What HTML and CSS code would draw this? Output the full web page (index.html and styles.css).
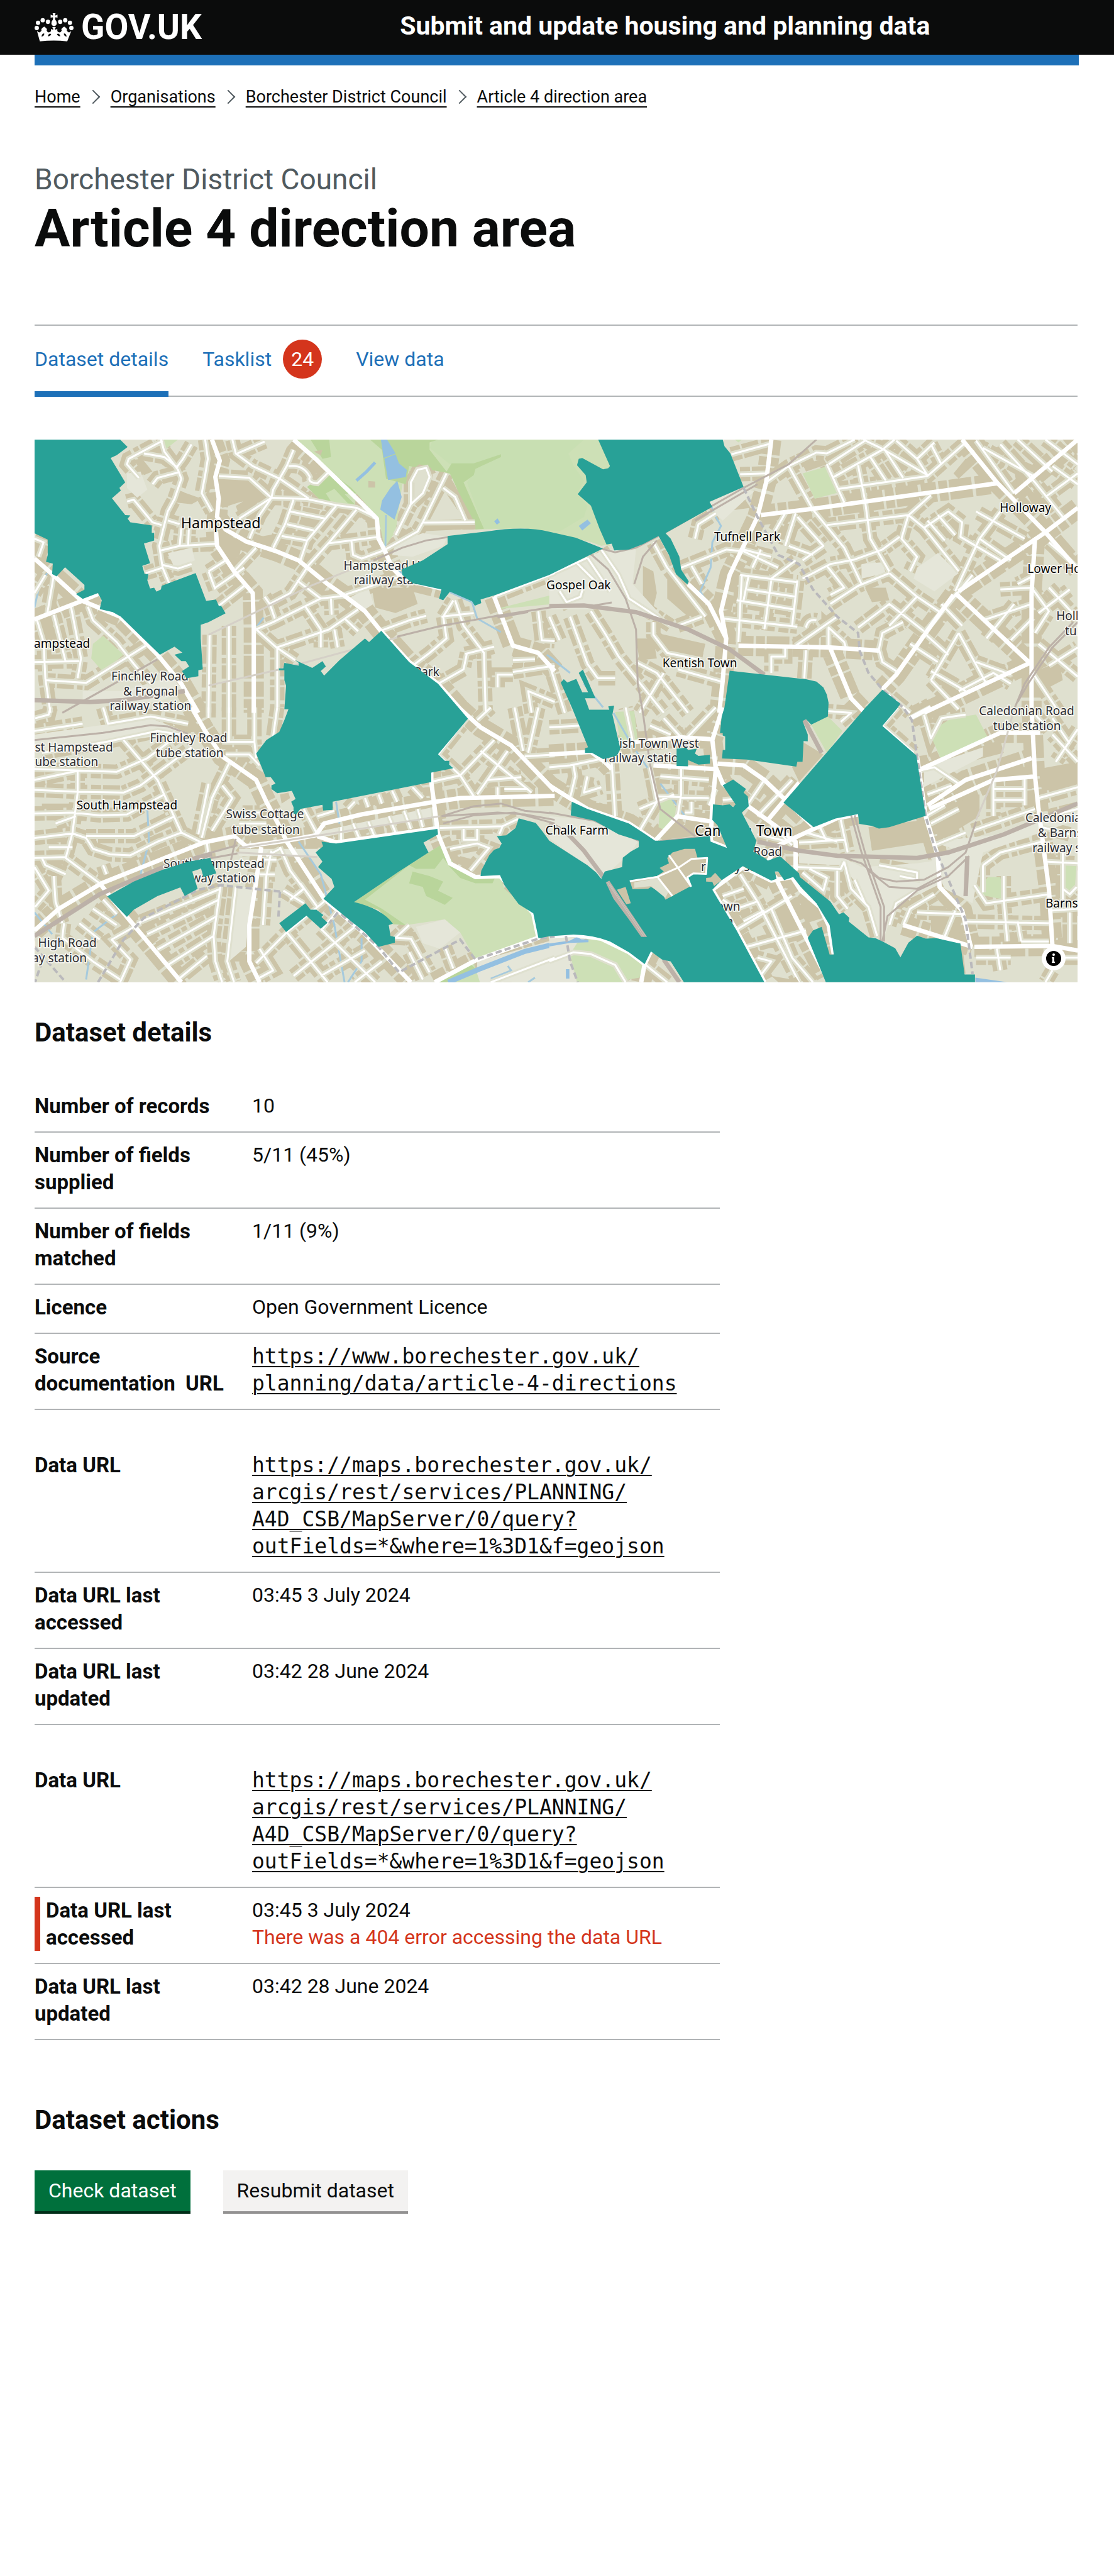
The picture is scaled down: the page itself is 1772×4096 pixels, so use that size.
FILE: index.html
```html
<!DOCTYPE html>
<html lang="en">
<head>
<meta charset="utf-8">
<meta name="viewport" content="width=device-width, initial-scale=1">
<title>Article 4 direction area - Submit and update housing and planning data</title>
<link rel="stylesheet" href="styles.css">
</head>
<body>
<header class="header">
  <div class="header-inner">
    <a class="logo" href="#" aria-label="GOV.UK">
      <svg class="crown" viewBox="18 24 216 157" aria-hidden="true">
        <circle cx="30" cy="106" r="12"/><circle cx="37" cy="77" r="12"/><circle cx="63" cy="63" r="12"/><circle cx="92" cy="72" r="12"/>
        <circle cx="222" cy="106" r="12"/><circle cx="214" cy="77" r="12"/><circle cx="188" cy="63" r="12"/><circle cx="160" cy="72" r="12"/>
        <path d="M118 24h16l-3 11q6 3 14-3v18q-8-5-14-2l2 13q8 8 8 19 0 12-15 17-15-5-15-17 0-11 8-19l2-13q-6-3-14 2V32q8 6 14 3z"/>
        <path d="M31 122q7 9 14 8 9-1 12-12-5-6 2-9 1-5 12-11 11 6 12 11 7 4 1 9 5 12 12 12 8 0 13-7v-12l8 4q6 0 5-3l-6-11h20l-6 11q0 3 6 3l8-4v12q5 7 13 7 8 0 12-12-6-5 1-9 1-5 12-11 11 6 12 11 7 3 2 9 3 11 12 12 7 1 14-8l-23 58Q126 171 47 180zM56 154q15-2 16-17-12-3-16 17zm35-2q16 0 19-12-12-8-19 12zm70 0q-7-20-19-12 3 12 19 12zm35 2q-4-20-16-17 1 15 16 17z" fill-rule="evenodd"/>
      </svg>
      <span>GOV.UK</span>
    </a>
    <a class="service" href="#">Submit and update housing and planning data</a>
  </div>
</header>
<div class="page">
  <div class="accent"></div>
  <nav aria-label="Breadcrumb">
    <ol class="crumbs">
      <li><a href="#">Home</a></li>
      <li><a href="#">Organisations</a></li>
      <li><a href="#">Borchester District Council</a></li>
      <li><a href="#">Article 4 direction area</a></li>
    </ol>
  </nav>
  <main>
    <p class="caption">Borchester District Council</p>
    <h1>Article 4 direction area</h1>
    <nav class="tabs" aria-label="Dataset">
      <a class="tab current" href="#" aria-current="page">Dataset details</a>
      <a class="tab" href="#">Tasklist <span class="count">24</span></a>
      <a class="tab" href="#">View data</a>
    </nav>

    <div class="map">
      <svg class="city" viewBox="64 808 1917 997" role="img" aria-label="Map of article 4 direction areas">
        <defs>
          <g id="roads-nw" transform="translate(40 790) scale(.625 .33333)">
            <path d="M410 54L420 120L460 220L470 270L450 380L430 450L415 560L405 640L415 760L435 850M500 80L475 160L455 210M345 265L310 190L315 160L415 60M360 130L420 150L460 210M385 300L400 265L460 235M540 54L548 160L540 250L530 350L560 450M620 54L630 130L680 200L760 270L845 380M715 65L635 130M800 110L780 200L740 330L735 375L640 490M580 255L670 265L735 375M735 375L700 470L670 600M800 385L775 520L740 650M925 420L840 610L820 720M985 440L905 620L845 745L790 900L730 960M790 450L895 490M780 520L860 555M765 585L840 610M905 625L1050 590M970 610L975 690L1000 710L1065 665M410 665L465 640L575 628M465 640L470 540M490 640L492 550M430 500L465 520M310 395L330 385L385 510L412 525M550 780L600 720M570 870L655 760M580 970L655 860M570 880L550 780M690 650L625 780M365 790L415 760M415 745L460 765L500 740"/>
            <path d="M735 375L840 382L925 415L985 430L1040 480M750 1200L905 1100L990 990M690 1100L740 1060L880 930L950 915M690 1100L750 1200L805 1270M730 960L745 1040M715 920L730 960M835 975L880 1100L880 1200M910 930L912 1020M810 830L880 930M1060 1105L1140 1050L1190 1025M950 910L1110 810M950 1040L990 1110M920 1100L930 1200M610 1080V1560M553 1130L550 1560M752 1200V1530M45 1045L65 1170L70 1370L85 1560M95 1020L130 1280M145 970L175 1260L165 1370M195 975L210 1050L280 1170L330 1290M38 1280L170 1275M70 1380L190 1395L365 1190M330 1290L380 1400M38 600L65 620L50 700M70 800L38 900M95 800L75 1020"/>
            <path d="M1240 1030L1250 1150L1200 1230L1150 1300M1275 940L1300 1080L1360 1230L1365 1560M1235 1030L1330 1010M1305 1235L1390 1195M1390 920L1568 790M1225 1400L1300 1320L1310 1230M1445 1270L1510 1265M1445 1335L1568 1300M1500 1560L1490 1440L1568 1500M1240 1030L1270 940M1520 1000L1530 1160L1568 1165M1400 1420V1350H1445M1145 410V290L1165 220L1190 210L1200 260L1180 350L1145 410L1100 580M1250 240L1180 510L1165 560L1070 660M1180 512L1333 510M1240 320L1275 370L1305 500M785 200Q830 190 848 260Q840 290 870 295L905 230"/>
          </g>
          <g id="main-nw" transform="translate(40 790) scale(.625 .33333)">
            <path d="M800 54L865 160L1000 405L1045 490L1050 600L1068 665L1090 760L1110 800L1160 840L1235 875M560 54L583 170L570 260L580 380L575 480L600 550L660 615L750 670L815 720L900 850L950 915L1010 1000L1055 1105L1140 1280L1225 1400L1300 1560M572 560L575 640L625 780L680 900L683 1090V1560M38 710L90 795L175 940L290 1030L400 1240L470 1400L520 1560M38 1045L175 945L225 905M1390 920L1445 1190L1520 1230L1568 1330"/>
          </g>
          <g id="roads-ne" transform="translate(1010 790) scale(.63776 .33333)">
            <path d="M525 135L640 75M550 245L625 240M625 290L690 200L770 125L800 130L880 54M690 200L760 440L850 650L900 850M800 190L850 400M805 190L910 60M820 260L960 110L995 54M835 325L1090 255L1200 70M905 54L960 105L1090 250M890 195L910 390L925 600L980 780M925 150L970 280M965 105L1020 265M1000 60L1060 160L1110 70M1060 160L1090 250M800 525L1035 470M680 460L650 560M710 460L680 640M715 480L790 640L730 720M690 640L760 690M1035 470L1080 540L1150 450L1190 510L1185 590L1300 720M1080 540L1180 780M1035 470L1015 600L1060 700L1040 780M1090 500L1140 610M1120 470L1170 580M1300 450L1240 600L1170 890M1240 600L1330 720M1100 360L1030 480M380 760L510 660L560 670L660 760M560 660L640 700M610 660L585 760M710 720L640 820M550 800L715 840M570 880L710 920M540 940L705 990M500 1040L715 1085M555 800L545 1170M575 800L560 940M640 830L620 1100M715 830L700 1080"/>
            <path d="M730 820L810 740L880 715L960 660L1010 590M810 960L890 860L980 790M800 750L850 870L810 910M980 790L1060 920L1130 1010M890 1090L980 960L1080 1110M950 1210L960 1120L1020 1060M950 1210L960 1280L1000 1330M1080 1120L1150 1240M1080 1120L1220 800M1180 1120L1100 1380M1250 1050L1390 960M1330 1160L1390 1045M1390 810L1350 850M1390 870L1440 1000L1400 1120M1100 1330L1200 1440M1180 1120L1260 1400M1060 920L980 1080M710 1190L830 1030M805 1200V1090L850 1170L855 1200M740 1090Q745 1040 770 1050M60 1030L110 1290L140 1370L190 1370M120 1000L160 1120L200 1250L330 1560M0 800L110 705M80 735L130 830M110 705L175 890M30 890L50 950L90 920L100 850M440 1030L370 1080M250 1280L310 1340L400 1560M370 1320L500 1390M330 1340L260 1560M0 1030L30 1160M0 1290L45 1560M740 1215L735 1370M680 1200V1250H640V1340M300 1060V1130L340 1230L440 1270M150 660L200 800L230 930L350 1080"/>
            <path d="M1230 60L1340 350M1300 80L1400 290L1480 480M1400 260L1250 100M1430 370L1523 240M1370 600L1230 450M1100 80L1130 190M1450 200L1523 300M1350 54L1450 230M1430 54L1523 190M1440 620L1523 760M1440 870L1523 1040M1440 1300L1523 1200M1390 1330L1470 1560M1410 1010L1500 880M1410 1180L1523 1360M1340 960L1260 1150M1300 880L1390 870M1230 1280L1330 1350M1180 1440L1280 1340L1330 1400M1130 960L1190 1080M1040 1180L1120 1280M1100 1380L1180 1540M960 1430L1040 1560M300 620L340 760L450 1030M420 600L430 520L480 460M410 750L440 850"/>
          </g>
          <g id="main-ne" transform="translate(1010 790) scale(.63776 .33333)">
            <path d="M640 54L625 290L600 480L520 800L495 1000L510 1150L500 1380L490 1560M610 470L760 435L1290 295M1190 54L1290 290L1430 565L1523 770M1400 600L1390 900V1560M1430 565L1180 890M1170 900L1385 1285L1080 1560M1165 910L1100 1080L1000 1350L960 1430M1523 430L1430 565M1340 350L1523 54M545 1190L810 1200L950 1217M810 1205L870 1480L910 1560M400 850L460 960L510 1150"/>
          </g>
          <g id="roads-sw" transform="translate(40 1300) scale(.625 .33333)">
            <path d="M38 455L165 465L300 470L350 430L500 220M38 340L280 355L370 280L470 140M300 180L400 400L470 690L535 750M165 350V470L150 690L130 830L230 970M38 585L150 580L230 595L310 590L420 480M38 720L150 695L190 720L210 780L260 810L320 815L400 740L470 690M190 710L330 710L450 600M38 830L130 825M60 830L70 870L130 920M685 0V190L690 280M610 0V190M752 0L740 160M550 0V60M590 190L685 190M600 260L670 260L700 320M550 420L520 700M610 310L560 500L530 720M590 430L620 500L560 680M545 740L550 830M650 580H700M640 640H720M100 640L160 600M80 770H150M240 870L250 920M40 60L80 40L85 0M38 130L180 90M255 90L380 50L490 90M240 0L255 95M38 400L165 350M60 250L250 190L400 130L500 160"/>
            <path d="M585 985L565 1260L570 1400L590 1515M630 990L605 1400L625 1515M580 1060L370 1250M575 1150L400 1335M565 1260L430 1420M545 1370L460 1500M585 1000L340 1190M350 1190L265 1280L320 1390L290 1515M125 1190L120 1270L210 1400L290 1500M95 930L100 1070L120 1190M38 880L80 1010L40 1100M780 1240L900 1515M880 1220L1040 1515M890 1070L780 1240L690 1410M980 1210L800 1480M1010 1340L880 1480M1060 1400L980 1515M930 1120L885 1220M700 1330L740 1450L700 1490M760 770L790 900L830 1000L790 1060M735 790L720 930L710 1200M700 840H750M700 920H745M760 780L720 820M210 1110L280 1200M240 1060L280 1140M170 1190L230 1280M770 1010L830 1080M820 970L870 1100"/>
            <path d="M1205 410L1290 375L1330 490M1225 260L1310 60M1225 260L1290 375L1390 180M1350 240L1500 470M1370 400L1470 385M1340 480L1430 240M1480 270L1568 260M1340 70L1380 0M1450 0L1475 240M1520 0L1490 250M1400 440V490M1420 450H1490M960 560L980 520M1010 500L1020 550M1050 480L1060 530M1090 460L1105 520M1150 440L1180 500M1125 570L1145 670M1165 560L1180 660M1210 550L1220 670M975 640L995 730M1020 630L1040 720M1080 600L1100 690M940 660V740M870 600L920 570M830 560L870 700M1230 665L1415 655L1460 615M1260 780L1340 750L1375 775L1320 900M1300 670V730H1340V670M1415 655L1405 700M1140 1200L1100 1270L1145 1275L1200 1460M1245 1320L1270 1440M1140 1350L1180 1500M1380 1515L1568 1380"/>
          </g>
          <g id="main-sw" transform="translate(40 1300) scale(.625 .33333)">
            <path d="M500 0L540 130L590 270L690 400L720 520L760 660L780 740L890 1055L1010 1250L1145 1515M38 1230L110 1110L235 970L535 745L625 710L660 765L780 735L865 705L890 640L1000 590L1200 525L1290 500L1568 488M705 770L690 960L670 1200V1400L700 1515M1285 0L1350 110L1440 210L1568 460M230 970L310 1155L470 1515M870 710L925 745L1225 665M1205 340V410L1225 700L1260 860L1335 935L1408 930L1505 1135L1520 1270L1335 1395L1215 1515"/>
          </g>
          <g id="roads-se" transform="translate(1010 1300) scale(.63776 .33333)">
            <path d="M180 300L190 600M60 500L75 380L70 320M0 330L60 320L160 280M380 330V480L370 600M290 330L310 520L260 680M310 490L460 500M260 560L360 480M320 380L460 400M110 380L100 470L150 440M480 450L460 540M390 580H410V520M560 500L500 510M570 540L620 400M600 600L660 480L700 400M240 180L220 0M380 165L330 60M400 160L480 0M290 100L350 150M0 110L90 100M720 0L760 90M840 80L870 30L800 20M840 620L860 800M720 745L850 730M740 690L830 740M780 660L800 740M715 880L840 890L850 850M850 850L870 1000L920 1100L945 1260M830 900V1040L860 1110M880 950L910 1080M730 910L790 1010L800 940L750 890M950 870L1060 910V950L1010 930M1280 400V600M1370 395L1370 540M1280 450H1370M1280 510H1370M1410 500L1523 440M1220 680L1400 560M1250 870L1300 800L1420 740M1430 850L1523 860M1225 980L1260 1080L1440 1030M1310 930V1060L1320 1290M1200 1180L1440 1190M1360 1290L1350 1180M1523 300L1450 150M1250 870V1020M1480 860V1000L1500 1030L1520 990M1500 1130V1300M1450 1450L1430 1515M1290 1330L1300 1450M1230 1380H1330M1360 1290H1440M1450 1120L1523 1110M1480 760V1060M1450 1380H1523"/>
            <path d="M0 1400L70 1350L120 1360L190 1420L220 1515M275 1415L340 1515M550 920L600 1070L720 1515M540 1225L700 1040M500 1040L560 1000M570 1320L740 1230M500 1060L540 1110L600 1070M560 1180L620 1120M600 1500L640 1400L600 1380M640 1110L700 1380L760 1515M1060 1010L1000 1080L980 1200M1110 1030L1040 1110L1020 1200M1170 1120L1140 1260M1060 1130L1190 1140M1110 760L1200 690M1100 640L1180 560M1085 600L1140 540M1090 480L1160 430M640 650L700 760M600 700L690 740M230 960L320 930L380 860L455 830M340 820L408 980M1005 0L960 100L1050 250M1040 60L1100 0M1080 40L1100 170L1130 60L1200 40M1040 360L1110 330L1180 420M1450 60L1500 200M1400 40L1440 120M1523 120L1460 300M1420 660L1500 700M1440 600L1523 560"/>
          </g>
          <g id="main-se" transform="translate(1010 1300) scale(.63776 .33333)">
            <path d="M500 0L470 180L480 340L470 540L465 740L512 775M0 430L50 490L110 560L230 640L305 735L370 600L470 630M480 330L500 420L570 540L650 650L710 740V900M0 260L120 245L250 190L380 165L465 175M120 245L160 300L180 340M630 850L660 760L830 610L890 590M300 320L475 340M485 310L560 320L620 400L760 655M720 415L630 620M1040 60L1100 0M1060 350L1300 140H1415M1390 0L1400 380L1410 560L1440 1000L1450 1310M1060 270L1085 600L1120 820L1125 990L1190 1120L1215 1320M1225 1320L1450 1315L1523 1340M1090 540L1200 400L1390 280M1095 560L1280 400L1400 380M1020 1200L1220 1320M700 935L725 1010L780 1100L805 1200L820 1360M470 1005L540 1230L620 1515M650 930L740 1270L797 1480M470 1005L560 880L640 955L700 935M0 1262L70 1253L150 1275L230 1350L275 1415L265 1515M275 1415L293 1345"/>
          </g>
        </defs>

        <rect class="land" x="64" y="808" width="1917" height="997"/>

        <use class="frontage" href="#roads-nw"/><use class="frontage" href="#roads-ne"/><use class="frontage" href="#roads-sw"/><use class="frontage" href="#roads-se"/>
        <use class="frontage wide" href="#main-nw"/><use class="frontage wide" href="#main-ne"/><use class="frontage wide" href="#main-sw"/><use class="frontage wide" href="#main-se"/>

        <g transform="translate(40 790) scale(.625 .33333)">
          <path class="block" d="M1030 870H1150L1165 960L1100 1010L1040 980zM580 580L620 590L650 620L640 700L610 720L580 660zM700 590L760 570L750 660L680 620zM575 270H680L730 370L690 380L640 400L590 430zM50 1045H85L110 1160L60 1180zM330 165L355 160L385 230L360 250zM545 370L580 380L585 490L555 450zM470 340L530 380L500 410L450 400zM1450 1200L1520 1230L1510 1260L1460 1260zM630 420L700 340L720 370L640 470z"/>
          <path class="open" d="M310 240L350 230L370 330L340 375L310 320zM430 680L500 650L510 720L450 760zM1100 620L1180 570L1253 590L1240 640L1150 700L1090 690zM960 930L1020 870L1035 960L1010 990zM180 1440L300 1440L440 1360L480 1440L400 1500H180z"/>
          <path class="park" d="M800 54H1730V640L1480 543L1335 550L1300 300L1250 235L1200 190L1150 200L1120 300L1100 560L1068 650L1050 490L985 350L905 230L865 160zM240 1135L300 1240L240 1335L205 1260L210 1180zM1390 990L1560 910L1568 960zM840 315L900 230L985 350L980 420L880 390zM415 54H460L425 105z"/>
          <path class="heath" d="M1210 54H1568V560L1480 543L1360 545L1310 290L1335 215L1260 190L1200 100z"/>
          <path class="wood" d="M850 54H905L910 150L885 160zM1025 54H1225L1200 70V110L1250 230L1265 185H1330L1410 135V150L1335 215L1330 250L1300 290L1360 545L1335 550L1260 240L1140 200L1130 300L1072 270L1060 110zM840 315L900 230L935 270L970 320L985 350L950 355L980 410L960 405L920 325L895 350L910 395L880 390z"/>
          <path class="water" d="M1057 54H1075L1100 130L1065 155zM1067 160L1100 135L1110 185L1133 220L1130 260L1078 277zM1085 320L1105 280L1118 370L1097 495L1055 440L1060 390zM1390 505L1400 488L1407 510L1398 523z"/>
          <path class="creek" d="M985 280L1015 230L1040 180"/>
          <path class="stream" d="M1072 470L1070 650L1090 760L1190 860L1235 880M1260 895L1325 950L1340 1040L1410 1115M75 790L50 880L38 980M690 1090L712 1035M1545 1240L1568 1270"/>
          <path class="block" d="M1140 230L1170 190L1205 210L1210 260L1180 360L1140 420zM1250 235L1270 290L1335 520V545L1170 560L1190 440zM1020 282L1040 285V318H1020zM860 120L885 110L880 140z"/>
          <path class="land" d="M1155 280L1165 230L1190 215L1195 260L1175 350L1155 390zM1245 340L1300 490L1200 500z"/>
        </g>
        <g transform="translate(1010 790) scale(.63776 .33333)">
          <path class="block" d="M270 750L300 780L310 900L300 980L270 950zM340 780L400 860L460 1000L400 1030L340 930zM210 740L230 700L245 720L240 770zM250 1150H300L310 1260L260 1270zM310 1120L450 1180L440 1260L340 1230zM1200 160L1230 180L1180 270L1165 240zM1360 300L1440 400L1400 440zM500 390L560 370L580 430L500 450zM1400 1330L1470 1280L1480 1380L1420 1440zM910 870L970 870L980 940L930 950zM1260 760L1370 640L1360 720L1290 790zM730 190L790 160L800 190L740 230zM1330 140L1400 200L1350 320z"/>
          <path class="open" d="M462 397L560 318L590 340L500 500L470 450zM1060 760L1120 680L1180 790L1110 890L1050 820zM900 740L960 730L970 790L900 820zM0 800L160 660L250 660L240 850L350 1080L200 990H0z"/>
          <path class="park" d="M0 54H141L175 200L160 218L95 155L80 195L108 290L82 355L120 418L165 632L150 640L80 590L0 555zM730 240L795 205L835 345L765 380zM535 54H555L545 70z"/>
          <path class="heath" d="M0 54H100L55 130L70 200L100 280L80 355L110 420L100 480L30 560L0 555z"/>
          <path class="water" d="M85 530L110 495L120 515L95 555z"/>
          <path class="stream" d="M468 425L480 480L495 530L470 620L465 760L435 890L500 1100L510 1150M0 1250L60 1340M100 1400L155 1530"/>
        </g>
        <g transform="translate(40 1300) scale(.625 .33333)">
          <path class="block" d="M430 70L500 50L530 130L480 140zM60 530H150V550L60 560zM635 1030H675V1115H635zM840 740L880 760L860 800L830 780zM1290 820L1330 840L1310 880L1280 860zM1475 1390L1500 1370L1515 1390L1500 1410L1480 1410zM760 480L785 470L790 500L765 530zM620 1340L660 1350L650 1400L620 1400z"/>
          <path class="open" d="M38 150L380 60L490 140L430 150L240 200L38 240zM640 780H870V820H640zM630 990H680L660 1320L610 1400zM1160 1210L1245 1168L1290 1240L1230 1330L1180 1300zM1340 1400L1568 1280V1515H1340zM860 690L1210 550L1215 600L870 720z"/>
          <path class="park" d="M1237 755L1270 860L1335 937L1408 930L1420 1000L1505 1135L1520 1275L1335 1390L1290 1240L1245 1168L1130 1200L1092 1195L1050 1115L978 1073L1110 905L1197 800zM1215 1515L1330 1410L1348 1515z"/>
          <path class="wood" d="M1237 755L1270 860L1335 937L1395 930L1385 970L1335 970L1290 940L1260 880L1240 830L1215 890L1160 890L1140 870L1010 1060L1060 1110L1130 1200L1092 1195L1050 1115L978 1073L1110 905L1197 800zM1150 905L1200 930L1240 960L1225 1010L1268 1050L1245 1088L1190 1040L1180 990L1140 970zM1215 1515L1320 1415L1335 1440L1250 1515z"/>
          <path class="canal" d="M1255 1515L1350 1440L1480 1345L1568 1305"/>
          <path class="stream" d="M370 560L375 740L350 920M925 520L935 640M815 740L880 920L920 1200L950 1515M1000 1270V1400L960 1515M280 1140L210 1240L190 1500M38 1130L90 1250M1380 1495L1440 1450L1430 1425M1490 1515L1510 1490"/>
        </g>
        <g transform="translate(1010 1300) scale(.63776 .33333)">
          <path class="block" d="M620 1120L690 1060L740 1250L660 1290zM130 770L175 730L210 800L170 850L140 830zM1100 1090L1190 1130L1180 1300L1100 1260zM1110 560L1240 480L1240 600L1120 740zM920 660L1080 620L1100 740L930 790zM1410 340L1523 300V440L1420 460zM30 460L60 520L180 600L190 540L110 520zM740 1050L790 1160L740 1190L720 1100zM1210 240L1300 180L1310 250L1230 290zM340 670L410 640L460 700L330 730zM1040 865L1100 870V910L1060 900zM730 190L790 260L720 410L700 330zM1090 1330L1190 1300L1200 1470z"/>
          <path class="open" d="M0 600L130 625L258 735L235 800L150 945L0 720zM720 780L850 830L900 880L1060 860L1130 840L1120 980L1000 1090L960 1290L900 1000L840 870L720 860zM1100 830L1523 560V620L1250 800L1220 1080L1140 1000zM1100 740L1300 700L1200 800zM0 1262L70 1253L120 1258L80 1300L60 1400L80 1515H0zM1080 330L1250 220V270L1080 440z"/>
          <path class="park" d="M190 25L245 20L255 190L205 190zM755 95L803 50L845 130L800 250zM320 510L350 500L375 590L335 680L315 660zM1125 100L1160 60L1230 40L1265 170L1130 290L1105 180zM1265 935H1300L1312 1060L1235 1030L1240 985zM1480 860H1520L1515 990L1500 1020L1480 980zM80 1300L120 1270L200 1310L275 1415L260 1490L230 1500L215 1515H80L60 1360z"/>
          <path class="water" d="M0 1302L60 1285L80 1265L92 1278L113 1280V1295L60 1298L0 1318zM48 1443H58V1495H48zM1228 1490L1320 1515H1228z"/>
          <path class="stream" d="M185 30L230 180M250 240L300 380M320 420L400 620M430 680V800M655 960L680 1040"/>
        </g>

        <use class="verge" href="#roads-nw"/><use class="verge" href="#roads-ne"/><use class="verge" href="#roads-sw"/><use class="verge" href="#roads-se"/>
        <use class="street" href="#roads-nw"/><use class="street" href="#roads-ne"/><use class="street" href="#roads-sw"/><use class="street" href="#roads-se"/>
        <use class="avenue" href="#main-nw"/><use class="avenue" href="#main-ne"/><use class="avenue" href="#main-sw"/><use class="avenue" href="#main-se"/>

        <g transform="translate(40 790) scale(.625 .33333)">
          <path class="tunnel" d="M550 1130L850 860L1035 720M550 1410L760 1320L1105 1145"/>
          <path class="rail" d="M120 1560L400 1265M1035 720L1120 650L1190 610L1260 590M1105 1140L1235 1080L1400 1025L1568 975M1400 1035L1490 1005"/>
          <path class="rail thick" d="M38 1490L200 1500L300 1490L480 1440"/>
        </g>
        <g transform="translate(1010 790) scale(.63776 .33333)">
          <path class="rail" d="M770 54L690 190L560 320L340 560L250 650L190 675L150 655M600 300L420 500M120 685L170 770L220 930L250 1100L255 1400L270 1560L290 1840L320 2090L420 2240M245 850L270 700L310 610M1510 1060L1440 1200L1370 1400L1340 1540M1523 1060L1450 1200L1380 1400L1350 1500M130 968L180 952"/>
          <path class="rail thick" d="M0 972L100 968L250 1005L400 1100L520 1210L620 1350"/>
          <path class="tunnel" d="M1340 1540L1290 1880L1230 2150"/>
          <path class="boundary" d="M560 320L600 480L640 620L660 690L720 740L760 880L830 1030L890 1120L895 1220L920 1340L960 1430L1020 1530L1045 1600L1060 1800L1085 2130L1110 2300L1200 2700L1220 3000"/>
        </g>
        <g transform="translate(40 1300) scale(.625 .33333)">
          <path class="tunnel" d="M635 800L870 825M640 775L1230 600"/>
          <path class="rail" d="M38 180L240 140L380 98L430 105L490 145M630 725L615 850M1235 600L1330 545L1410 530L1480 570L1568 585M1240 640L1330 595L1450 580L1568 640M1235 600L1400 580L1480 590L1568 620M500 830L635 760M500 850L635 805"/>
          <path class="rail thick" d="M38 1260L230 1030L430 870L560 810"/>
          <path class="boundary" d="M760 1015L585 980L520 1005L360 1160L300 1280L225 1515M760 1015L755 1170M930 1130L905 1190M940 1140L1050 1320L1110 1460L1290 1280L1335 1390L1520 1275L1568 1262M38 1320L130 1515M60 1400L40 1515"/>
        </g>
        <g transform="translate(1010 1300) scale(.63776 .33333)">
          <path class="rail" d="M870 595L900 800L955 1100V1290M880 595L910 800L965 1100V1290M830 815L900 860L950 940L1000 960L1080 950L1150 880L1200 800L1230 630M960 1290L975 1150L1060 1010L1150 930L1210 820M920 900L980 990L1060 1000L1130 930M0 580L130 625L258 735M320 737L463 710"/>
          <path class="rail thick" d="M600 740L720 790L830 818L1060 830L1150 800L1310 700L1523 530M735 70L785 250M0 640L50 690L100 790L160 945M330 1390L375 1515M1205 820L1200 1040"/>
          <path class="boundary" d="M48 1260L60 1400L82 1515"/>
        </g>

        <g class="labels">
          <text class="town" x="333" y="971">Hampstead</text>
          <text x="632" y="1047">Hampstead Heath</text><text x="651" y="1074">railway station</text>
          <text x="205" y="1251">Finchley Road</text><text x="227" y="1278">&amp; Frognal</text><text x="202" y="1305">railway station</text>
          <text class="area end" x="166" y="1190">West Hampstead</text>
          <text class="end" x="808" y="1242">Belsize Park</text><text class="end" x="806" y="1269">tube station</text>
          <text x="276" y="1364">Finchley Road</text><text x="287" y="1392">tube station</text>
          <text class="end" x="208" y="1381">West Hampstead</text><text class="end" x="181" y="1408">tube station</text>
          <text class="area" x="141" y="1487">South Hampstead</text>
          <text x="416" y="1504">Swiss Cottage</text><text x="427" y="1532">tube station</text>
          <text x="301" y="1595">South Hampstead</text><text class="end" x="470" y="1622">railway station</text>
          <text class="end" x="178" y="1741">Kilburn High Road</text><text class="end" x="160" y="1768">railway station</text>
          <text class="area end" x="1123" y="1083">Gospel Oak</text>
          <text class="area" x="1313" y="994">Tufnell Park</text>
          <text class="area" x="1838" y="941">Holloway</text>
          <text class="area" x="1889" y="1053">Lower Holloway</text>
          <text x="1942" y="1140">Holloway Road</text><text x="1958" y="1167">tube station</text>
          <text class="area" x="1218" y="1226">Kentish Town</text>
          <text x="1800" y="1314">Caledonian Road</text><text x="1826" y="1342">tube station</text>
          <text class="end" x="1285" y="1374">Kentish Town West</text><text x="1111" y="1401">railway station</text>
          <text class="area end" x="1119" y="1534">Chalk Farm</text>
          <text class="town end" x="1457" y="1536">Camden Town</text>
          <text class="end" x="1438" y="1573">Camden Road</text><text x="1289" y="1601">railway station</text>
          <text class="end" x="1361" y="1673">Camden Town</text><text class="end" x="1348" y="1701">tube station</text>
          <text x="1885" y="1511">Caledonian Road</text><text x="1908" y="1538">&amp; Barnsbury</text><text x="1898" y="1566">railway station</text>
          <text class="area" x="1922" y="1668">Barnsbury</text>
        </g>

        <g class="zones">
          <g transform="translate(40 790) scale(.625 .33333)">
            <path d="M38 54H290L312 95L280 140L262 155L305 290L288 320L292 335L266 377L305 470L320 472L312 490L320 510L383 527V568H390V610L360 627L378 735L355 750L362 795H373L370 830L378 875L390 870L397 892L410 880L412 860L512 790L543 943L572 935L580 970H587L600 1012L550 1060L527 1075V1150L533 1320L520 1325V1358L485 1370L472 1330L493 1305L483 1275H470L450 1240L473 1228L450 1195L407 1240L292 1030L268 1005L230 988L236 940L225 900L180 932L160 905L185 882V855L128 758L103 808L90 795L92 738L72 727L77 690V605L38 570z"/>
            <path d="M1253 585L1370 560Q1480 528 1552 562L1630 595L1710 655L1552 800L1390 913L1350 935L1352 955L1333 970L1325 945L1260 892L1240 940L1228 930L1235 880L1150 845L1120 800L1118 770L1180 720L1253 630z"/>
            <path d="M1058 1108L1140 1280L1225 1400L1313 1592L1225 1788L1245 1825H1258V1845L1270 1865L1205 1890V1942L915 2050V2095L887 2098L885 2067L820 2090L808 2120L800 2115V2080L793 2050L806 2035L795 1990L752 2003L735 1980V1960L747 1950L733 1915H718L690 1785L720 1710L758 1665L773 1600L785 1540L773 1540L778 1410L773 1380V1325H757V1315H770L773 1285L815 1300V1285L805 1270L855 1312L885 1275L895 1305L880 1330L890 1355L935 1270L1010 1150L1022 1170z"/>
          </g>
          <g transform="translate(1010 790) scale(.63776 .33333)">
            <path d="M141 54H500L505 90L522 130L560 315L462 397L470 425L335 570L350 600L375 700L380 770L402 835L398 852L365 795L345 690L315 585L270 630L230 660L187 665L180 628L165 632L145 545L120 418L82 355L108 290L105 250L80 195L85 160L95 155L155 218L170 212L175 200z"/>
            <path d="M520 1328L740 1375L770 1388L790 1420L800 1460L805 1505L803 1580L755 1625L740 1595L730 1605L745 1680V1717L733 1715L730 1830H715L712 1857L570 1818L498 1812L500 1765H507V1690L500 1685V1672H492L497 1580L505 1530z"/>
            <path d="M960 1433L1012 1510L1003 1535L960 1632L1058 1795L1085 2128L980 2190L950 2198L930 2183L893 2172L890 2118L825 2143L762 2190L675 2055L912 1530z"/>
            <path d="M33 1393L42 1375L52 1393L78 1373L95 1447H112L85 1340L97 1322L133 1480H103L115 1543H173L170 1525L187 1520L182 1570L205 1760L195 1795L180 1805L155 1815L123 1780H103V1755L112 1750L65 1530z"/>
            <path d="M367 1758L395 1752L400 1765L425 1758L420 1785L430 1798L463 1792V1840L430 1845L400 1820V1855L367 1853z"/>
          </g>
          <g transform="translate(40 1300) scale(.625 .33333)">
            <path d="M252 1042L330 960L415 895L490 850L555 830L573 915L535 935L528 888L502 905L518 1000L480 1040L467 992L400 1040L330 1115L310 1155z"/>
            <path d="M758 1190L835 1080L850 1115H867L888 1145L882 1155L900 1187L880 1220L838 1148L778 1238z"/>
            <path d="M882 740L925 750L1223 670L1225 700L1182 745L1197 800L1110 905L978 1073Q1060 1110 1092 1192L1080 1200L1085 1260L1098 1265V1297L1050 1320L1010 1240L970 1180L888 1055L920 990L912 945L872 880L885 850L865 800L887 765z"/>
          </g>
          <g transform="translate(1010 1300) scale(.63776 .33333)">
            <path d="M65 520L110 560L230 640L270 690L305 735H325L463 710L465 740L512 775L485 650L470 620L472 535L500 540L520 535L530 550L537 535L500 430L530 398L567 450L560 470L572 490L575 545L555 580L597 735L588 795L625 835L630 845L665 820L720 915L722 935L810 1070L835 1140L848 1130L865 1160L863 1180L920 1268L940 1272L965 1295L997 1328L1012 1378L1035 1297L1060 1258L1085 1275L1115 1272L1185 1302L1197 1472H1227V1515H797L745 1270L760 1230L785 1210L808 1362H820L808 1200L770 1080L725 990L703 935L677 952L660 905H650L655 945L640 955L558 875L497 952L470 1005L540 1230L620 1515H388L350 1400L325 1390L293 1345L275 1415L230 1350L175 1290Q130 1255 70 1252L0 1262L-31 1273L-46 1135L-88 1085L-129 980L-142 925L-198 930L-196 900L-173 815L-159 785L-144 775L-137 750L-151 710L-124 705L-97 665L-88 612L-39 637L-17 690L0 735L110 870L135 910L150 945L160 905L210 880L212 828L235 795L258 770V735L200 700L130 625L62 595z"/>
          </g>
        </g>
        <g transform="translate(1010 1300) scale(.63776 .33333)">
          <path class="block" d="M232 955L310 930L330 905L318 885L345 860L340 830L355 800L390 780H420L427 828L455 830L452 918L415 915L398 937L408 985L335 1060L325 1025L293 990L285 1000L240 1003zM452 940L465 938L478 912L497 952L475 985L470 962L452 960zM195 1005L220 990L235 1080L222 1085zM640 1480L700 1500L710 1485L720 1515H660z"/>
          <path class="land" d="M245 965L310 940L345 1010L335 1050L293 985L245 995z"/>
          <path class="bridge" d="M163 965L173 955L282 1265L265 1265L228 1165L185 1055z"/>
          <path class="street" d="M232 958L310 935L375 880L410 835L455 830L452 918L415 915L398 937L408 985L345 815M310 930L355 1040"/>
          <path class="rails" d="M168 965L272 1262M175 975L278 1262"/>
        </g>
        <text class="over" x="1289" y="1601">r</text>
      </svg>
      <button class="attribution" type="button" aria-label="Map attribution">
        <svg viewBox="0 0 24 24" aria-hidden="true"><circle cx="12" cy="12" r="12"/><circle class="dot" cx="12" cy="6" r="2"/><path class="dot" d="M9 10h4v7h1v2H9v-2h1v-5H9z"/></svg>
      </button>
    </div>

    <h2>Dataset details</h2>
    <dl class="summary">
      <div><dt>Number of records</dt><dd>10</dd></div>
      <div><dt>Number of fields supplied</dt><dd>5/11 (45%)</dd></div>
      <div><dt>Number of fields matched</dt><dd>1/11 (9%)</dd></div>
      <div><dt>Licence</dt><dd>Open Government Licence</dd></div>
      <div><dt>Source documentation&nbsp; URL</dt><dd><a href="#">https://www.borechester.gov.uk/<wbr>planning/data/article-4-directions</a></dd></div>
    </dl>
    <dl class="summary">
      <div><dt>Data URL</dt><dd><a href="#">https://maps.borechester.gov.uk/<wbr>arcgis/rest/services/PLANNING/<wbr>A4D_CSB/MapServer/0/query?<wbr>outFields=*&amp;where=1%3D1&amp;f=geojson</a></dd></div>
      <div><dt>Data URL last accessed</dt><dd>03:45 3 July 2024</dd></div>
      <div><dt>Data URL last updated</dt><dd>03:42 28 June 2024</dd></div>
    </dl>
    <dl class="summary">
      <div><dt>Data URL</dt><dd><a href="#">https://maps.borechester.gov.uk/<wbr>arcgis/rest/services/PLANNING/<wbr>A4D_CSB/MapServer/0/query?<wbr>outFields=*&amp;where=1%3D1&amp;f=geojson</a></dd></div>
      <div><dt class="failed">Data URL last accessed</dt><dd>03:45 3 July 2024<span class="error">There was a 404 error accessing the data URL</span></dd></div>
      <div><dt>Data URL last updated</dt><dd>03:42 28 June 2024</dd></div>
    </dl>

    <h2 class="actions-title">Dataset actions</h2>
    <div class="actions">
      <button class="button" type="button">Check dataset</button>
      <button class="button secondary" type="button">Resubmit dataset</button>
    </div>
  </main>
</div>
</body>
</html>
```
FILE: styles.css
```css
* { box-sizing: border-box; }

body {
  margin: 0;
  background: #fff;
  color: #0b0c0c;
  font: 32px/43px Roboto, "Liberation Sans", sans-serif;
}

a { color: inherit; }
h1, h2, p, dl, dd, ol { margin: 0; padding: 0; }

.header { background: #0b0c0c; color: #fff; }
.header a { text-decoration: none; }
.header-inner {
  display: grid;
  grid-template-columns: 35% 1fr;
  height: 87px;
  padding: 0 56px 0 55px;
}
.logo {
  display: flex;
  align-items: center;
  gap: 12px;
  font-size: 55px;
  font-weight: 700;
  line-height: 83px;
}
.crown { width: 62px; height: 45px; fill: #fff; }
.service { font-size: 41px; font-weight: 700; line-height: 82px; white-space: nowrap; }

.page { padding: 0 56px 0 55px; }
.accent { height: 17px; background: #1d70b8; }

.crumbs {
  display: flex;
  list-style: none;
  margin-top: 30px;
  font-size: 27px;
  line-height: 40px;
}
.crumbs li { display: flex; align-items: center; }
.crumbs a { text-underline-offset: 6px; text-decoration-thickness: 2px; }
.crumbs li + li::before {
  content: "";
  width: 14px;
  height: 14px;
  margin: 0 20px 0 12px;
  border: solid #505a5f;
  border-width: 2px 2px 0 0;
  transform: rotate(45deg);
}

main { padding-right: 2px; }
.caption { margin-top: 81px; color: #505a5f; font-size: 46px; line-height: 60px; }
h1 { margin-top: 4px; font-size: 84px; line-height: 90px; }

.tabs {
  display: flex;
  gap: 54px;
  height: 115px;
  margin-top: 107px;
  border: solid #b1b4b6;
  border-width: 2px 0;
}
.tab {
  display: flex;
  align-items: center;
  gap: 18px;
  margin-bottom: -2px;
  padding-top: 2px;
  border-bottom: 9px solid transparent;
  color: #1d70b8;
  text-decoration: none;
}
.tab.current { border-bottom-color: #1d70b8; }
.count {
  width: 62px;
  border-radius: 50%;
  background: #d4351c;
  color: #fff;
  line-height: 62px;
  text-align: center;
}

.map { position: relative; margin-top: 68px; overflow: hidden; }
.city { display: block; width: 100%; height: auto; }
.city path { vector-effect: non-scaling-stroke; }
.land { fill: #dfe0cf; }
.open { fill: #e5e6d9; }
.block { fill: #ccc4a8; }
.park { fill: #cde0b6; }
.heath { fill: #c8dfb2; }
.wood { fill: #b9d59b; }
.water { fill: #94c0e1; }
.creek, .stream, .canal, .rail, .tunnel, .boundary, .frontage, .verge, .street, .avenue, .rails { fill: none; }
.creek { stroke: #94c0e1; stroke-width: 5; }
.canal { stroke: #94c0e1; stroke-width: 8; }
.stream { stroke: #a6cadd; stroke-width: 3; }
.frontage { stroke: #ccc4a8; stroke-width: 23; stroke-dasharray: 16 3 27 5 9 3 21 6; }
.frontage.wide { stroke-width: 32; stroke-dasharray: 24 4 14 3 36 5; }
.verge { stroke: #dfe0cf; stroke-width: 9; }
.street { stroke: #fff; stroke-width: 3; stroke-linejoin: round; }
.avenue { stroke: #fff; stroke-width: 7; stroke-linejoin: round; }
.rail { stroke: #bcb1a8; stroke-width: 3; }
.rail.thick { stroke-width: 7; }
.tunnel { stroke: #d5d0c7; stroke-width: 3; }
.boundary { stroke: #bab9bc; stroke-width: 4; stroke-dasharray: 10 5; }
.bridge { fill: #bcb1a8; }
.rails { stroke: #d2cac2; stroke-width: 1; }
.zones { fill: #28a197; }
.labels text, .over {
  font-family: "Noto Sans", sans-serif;
  font-size: 22px;
  fill: #2c2d33;
  stroke: #f6f6f0;
  stroke-width: 4px;
  stroke-linejoin: round;
  paint-order: stroke;
}
.labels .area, .labels .town { fill: #050505; }
.labels .town { font-size: 27px; }
.labels .end { text-anchor: end; }

.attribution {
  position: absolute;
  right: 19px;
  bottom: 19px;
  width: 38px;
  height: 38px;
  padding: 7px;
  border: 0;
  border-radius: 50%;
  background: #fff;
}
.attribution svg { display: block; width: 24px; height: 24px; }
.attribution .dot { fill: #fff; }

h2 { margin-top: 54px; font-size: 42px; line-height: 52px; }
.summary { width: 66%; margin-top: 52px; padding-right: 5px; }
h2 + .summary { margin-top: 55px; }
.summary > div {
  display: grid;
  grid-template-columns: 346px 1fr;
  padding: 14px 0 19px;
  border-bottom: 2px solid #b1b4b6;
}
dt { padding-right: 20px; font-size: 33px; font-weight: 700; }
dt.failed { padding-left: 9px; border-left: 9px solid #d4351c; }
.summary a {
  display: block;
  font-family: "DejaVu Sans Mono", monospace;
  font-size: 33px;
  text-decoration-thickness: 2px;
  text-underline-offset: 4px;
}
.error { display: block; color: #d4351c; }

.actions-title { margin-top: 101px; }
.actions { display: flex; gap: 52px; margin: 54px 0 80px; }
.button {
  height: 65px;
  padding: 0 22px;
  border: 0;
  background: #00703c;
  box-shadow: 0 4px 0 #002d18;
  color: #fff;
  font: inherit;
}
.button.secondary { background: #f3f2f1; box-shadow: 0 4px 0 #929191; color: #0b0c0c; }
```
